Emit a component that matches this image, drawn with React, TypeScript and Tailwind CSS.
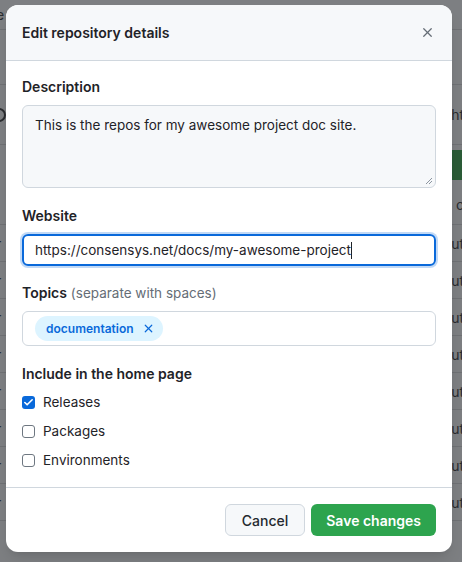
import { X, Check } from 'lucide-react'

// Dimmed page rows peeking out from behind the dialog
const rowsRight = ['ut', 'ut', 'ut', 'ut', 'ut', 'ut', 'ut', 'ut']

const Checkbox = ({ checked, label }: { checked?: boolean; label: string }) => (
  <label className="flex items-center gap-2 h-[29px]">
    <span
      className={
        checked
          ? 'w-[13px] h-[13px] rounded-[3px] bg-[#0969da] flex items-center justify-center'
          : 'w-[13px] h-[13px] rounded-[3px] border border-[#6e7781] bg-white'
      }
    >
      {checked && <Check size={11} strokeWidth={3.5} color="white" />}
    </span>
    <span className="text-[13.5px] text-[#1f2328]">{label}</span>
  </label>
)

export default function App() {
  return (
    <div
      className="relative w-[462px] h-[562px] overflow-hidden bg-[#7d7f82]"
      style={{ fontFamily: 'Inter, "Liberation Sans", Arial, sans-serif' }}
    >
      {/* Background page (dimmed) */}
      <div className="flex flex-col text-[#2b2d30] text-[14px]">
        <div className="h-[30px] border-b border-[#6f7174] flex items-center justify-between pr-0">
          <span className="-ml-[4px]">e</span>
        </div>
        <div className="h-[55px] border-b border-[#6f7174]" />
        <div className="h-[60px] border-b border-[#6f7174] flex items-center justify-between">
          <span className="-ml-[8px] w-[14px] h-[14px] rounded-full border-2 border-[#2b2d30]" />
          <span className="-mr-[2px]">ht</span>
        </div>
        <div className="h-[40px] flex items-center justify-end">
          <span className="w-[14px] h-[30px] bg-[#2b5c37]" />
        </div>
        <div className="h-[40px] border-b border-[#6f7174] flex items-center justify-end">
          <span className="-mr-[2px]">l c</span>
        </div>
        {rowsRight.map((t, i) => (
          <div key={i} className="h-[37px] border-b border-[#6f7174] flex items-center justify-between">
            <span className="-ml-[4px]">r</span>
            <span className="-mr-[2px]">{t}</span>
          </div>
        ))}
      </div>

      {/* Dialog */}
      <div className="absolute left-[6px] top-[5px] w-[446px] h-[547px] bg-white rounded-[12px] overflow-hidden flex flex-col shadow-lg">
        {/* Header */}
        <div className="h-[56px] shrink-0 bg-[#f6f8fa] border-b border-[#d0d7de] flex items-center justify-between pl-4 pr-[17px]">
          <h1 className="text-[14px] font-semibold text-[#1f2328]">Edit repository details</h1>
          <X size={15} strokeWidth={2} color="#656d76" />
        </div>

        {/* Body */}
        <div className="flex-1 px-4 pt-[16px] flex flex-col text-[#1f2328]">
          <label className="text-[14px] font-semibold leading-5 mb-2">Description</label>
          <div className="relative h-[83px] rounded-[6px] border border-[#d0d7de] bg-[#f6f8fa] px-3 pt-[9px] text-[13.5px] leading-5">
            This is the repos for my awesome project doc site.
            <svg className="absolute right-[2px] bottom-[2px]" width="8" height="8" viewBox="0 0 8 8">
              <path d="M7 1L1 7M7 4L4 7" stroke="#8c959f" strokeWidth="1" />
            </svg>
          </div>

          <label className="text-[14px] font-semibold leading-5 mt-[18px] mb-2">Website</label>
          <div className="h-[32px] rounded-[6px] border-2 border-[#0969da] shadow-[0_0_0_2px_rgba(9,105,218,0.25)] px-[11px] flex items-center text-[13.5px]">
            <span>https://consensys.net/docs/my-awesome-project</span>
            <span className="w-px h-[17px] bg-[#1f2328]" />
          </div>

          <label className="text-[14px] leading-5 mt-[17px] mb-2">
            <span className="font-semibold">Topics</span>{' '}
            <span className="text-[13.5px] text-[#656d76]">(separate with spaces)</span>
          </label>
          <div className="h-[35px] rounded-[6px] border border-[#d0d7de] px-3 flex items-center">
            <span className="h-[25px] rounded-full bg-[#ddf4ff] text-[#0969da] text-[12px] font-semibold flex items-center gap-[8px] pl-[11px] pr-[8px]">
              documentation
              <X size={13} strokeWidth={2.2} />
            </span>
          </div>

          <label className="text-[14px] font-semibold leading-5 mt-[18px] mb-[4px]">Include in the home page</label>
          <Checkbox checked label="Releases" />
          <Checkbox label="Packages" />
          <Checkbox label="Environments" />
        </div>

        {/* Footer */}
        <div className="h-[65px] shrink-0 border-t border-[#d0d7de] flex items-center justify-end gap-[6px] px-4">
          <button className="h-[32px] px-[16px] rounded-[6px] border border-[#d0d7de] bg-[#f6f8fa] text-[14px] font-medium text-[#24292f]">
            Cancel
          </button>
          <button className="h-[32px] px-[15px] rounded-[6px] bg-[#2da44e] text-[14px] font-semibold text-white">
            Save changes
          </button>
        </div>
      </div>
    </div>
  )
}
